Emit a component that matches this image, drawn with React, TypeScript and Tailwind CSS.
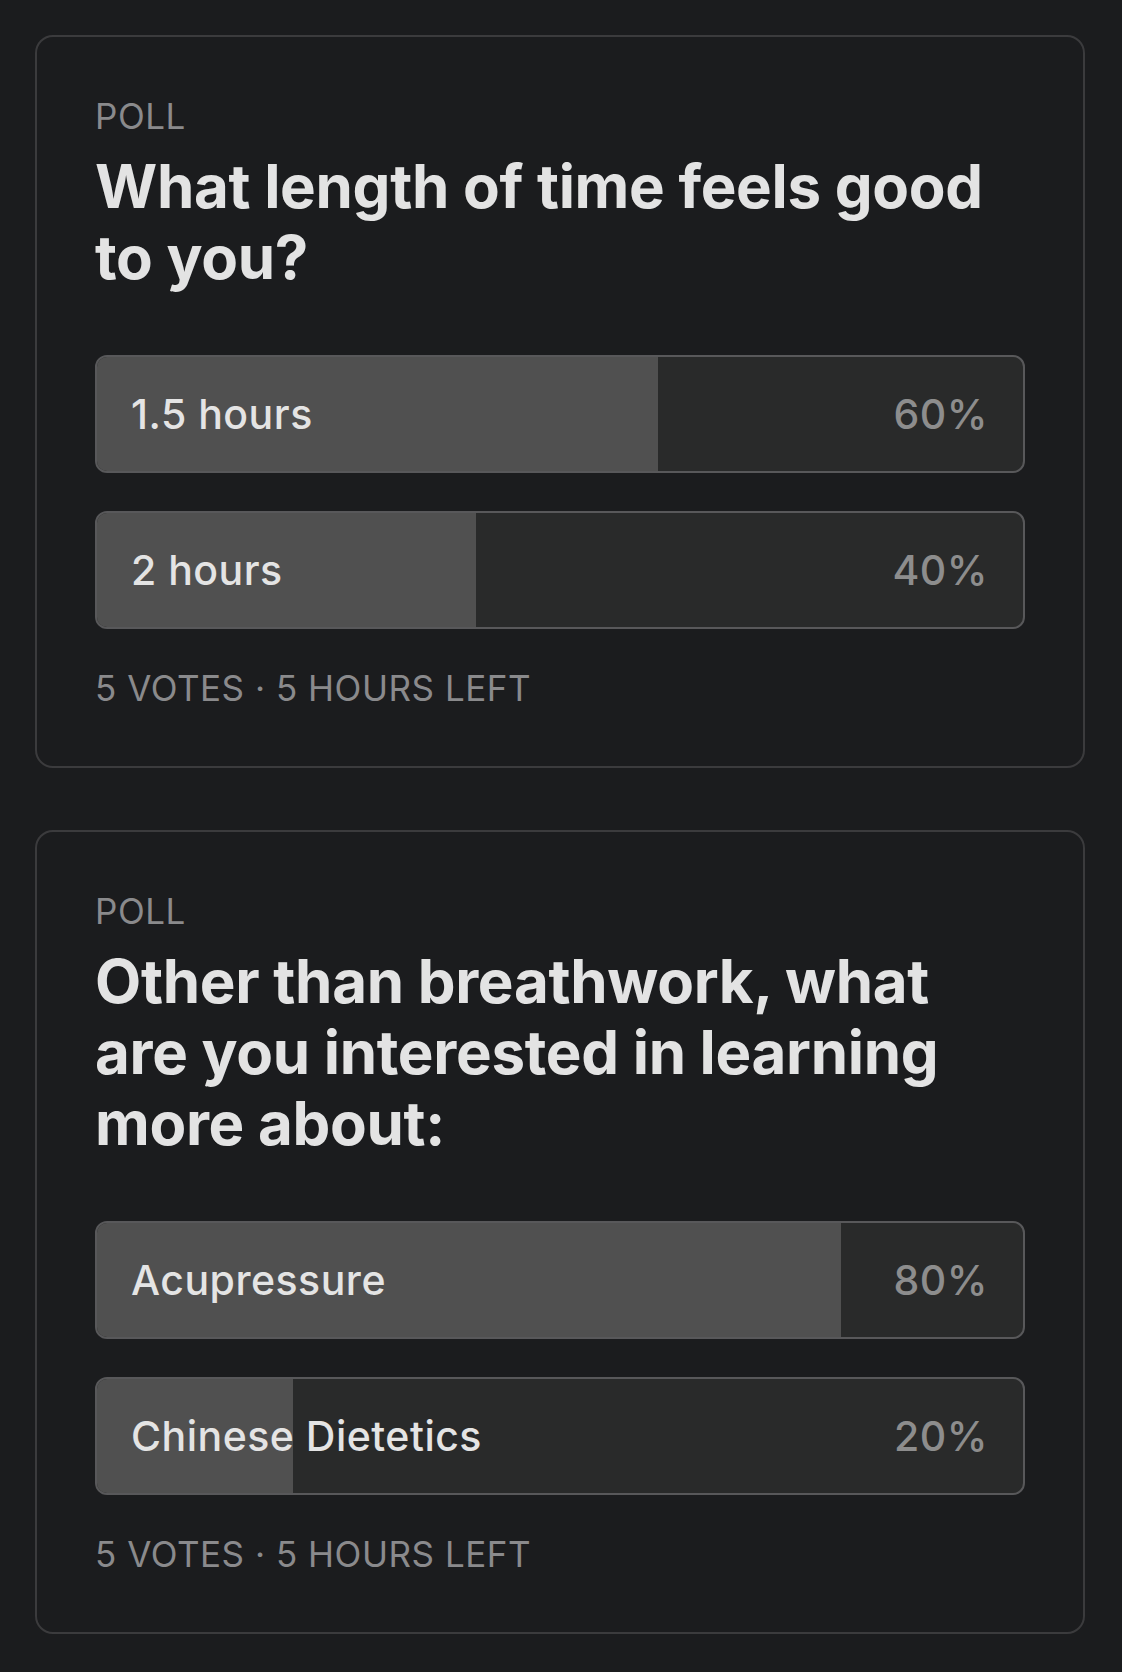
const polls = [
  {
    question: 'What length of time feels good to you?',
    options: [
      { label: '1.5 hours', pct: 60 },
      { label: '2 hours', pct: 40 },
    ],
    footer: '5 VOTES · 5 HOURS LEFT',
  },
  {
    question: 'Other than breathwork, what are you interested in learning more about:',
    options: [
      { label: 'Acupressure', pct: 80 },
      { label: 'Chinese Dietetics', pct: 20 },
    ],
    footer: '5 VOTES · 5 HOURS LEFT',
  },
];

function OptionBar({ label, pct }: { label: string; pct: number }) {
  return (
    <div className="relative h-[118px] rounded-[12px] border-2 border-[#58585a] bg-[#292a2a] overflow-hidden flex items-center justify-between pl-[34px] pr-[35px]">
      <div className="absolute inset-y-0 left-0 bg-[#505050]" style={{ width: `${13 + pct * 9.14}px` }} />
      <span className="relative text-[41px] leading-[48px] font-medium tracking-[0.012em] text-[#e4e4e4]">{label}</span>
      <span className="relative text-[41px] leading-[48px] font-medium tracking-[0.012em] text-[#8d8d8d]">{pct}%</span>
    </div>
  );
}

export default function App() {
  return (
    <div className="min-h-screen bg-[#1b1c1e] px-[35px] pt-[35px] pb-[38px] font-['Inter',sans-serif]">
      <div className="w-[1050px] flex flex-col gap-[62px]">
        {polls.map((poll) => (
          <div key={poll.question} className="rounded-[18px] border-2 border-[#3b3b3d] px-[58px] pt-[59px] pb-[57px]">
            <p className="text-[35px] leading-[41px] text-[#8a8a8c] tracking-[0.015em]">POLL</p>
            <h2 className="mt-[14px] text-[60px] leading-[71px] font-bold text-[#e3e3e3] tracking-[-0.005em]">
              {poll.question}
            </h2>
            <div className="mt-[62px] flex flex-col gap-[38px]">
              {poll.options.map((o) => (
                <OptionBar key={o.label} label={o.label} pct={o.pct} />
              ))}
            </div>
            <p className="mt-[39px] text-[35px] leading-[41px] text-[#8a8a8c] tracking-[0.015em]">{poll.footer}</p>
          </div>
        ))}
      </div>
    </div>
  );
}
